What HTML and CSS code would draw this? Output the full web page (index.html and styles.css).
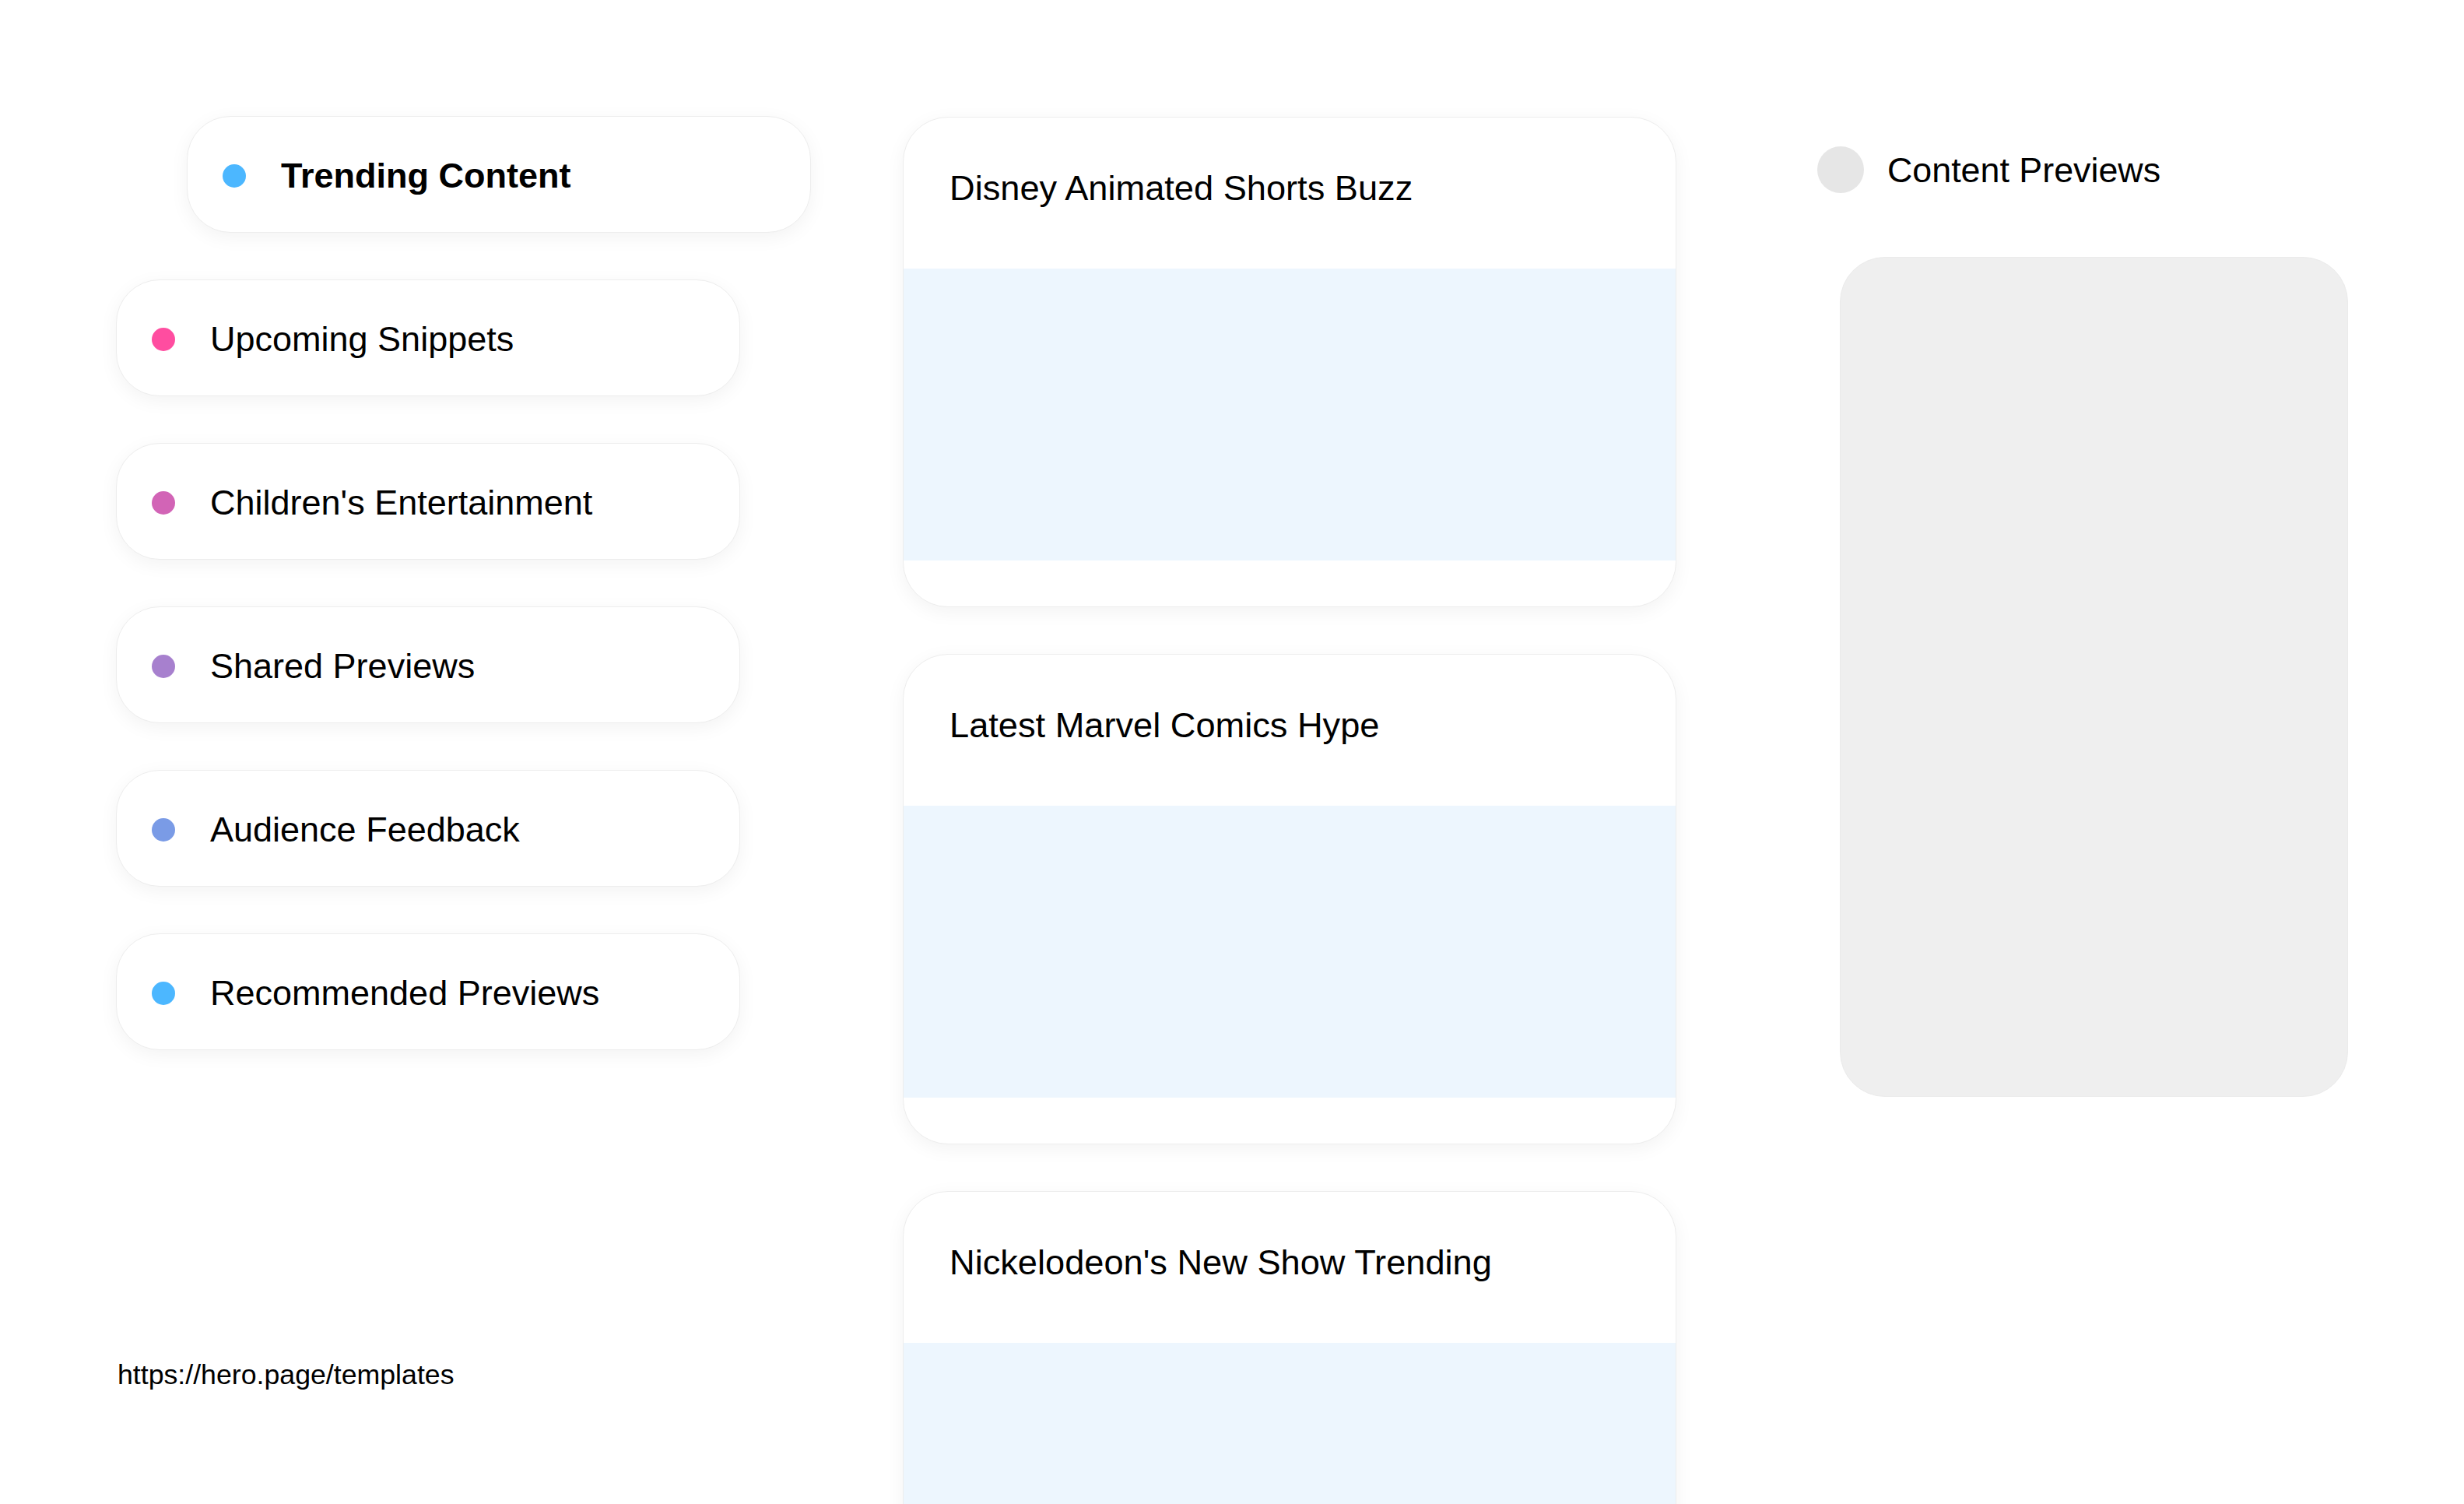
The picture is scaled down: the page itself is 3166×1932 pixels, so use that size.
FILE: index.html
```html
<!DOCTYPE html>
<html lang="en">
<head>
<meta charset="utf-8">
<title>Content Previews</title>
<link rel="stylesheet" href="styles.css">
</head>
<body>
<div class="page">
  <aside class="left">
    <nav class="nav">
      <div class="pill active"><span class="dot dot-blue"></span><span class="pill-label">Trending Content</span></div>
      <div class="pill"><span class="dot dot-pink"></span><span class="pill-label">Upcoming Snippets</span></div>
      <div class="pill"><span class="dot dot-magenta"></span><span class="pill-label">Children's Entertainment</span></div>
      <div class="pill"><span class="dot dot-purple"></span><span class="pill-label">Shared Previews</span></div>
      <div class="pill"><span class="dot dot-indigo"></span><span class="pill-label">Audience Feedback</span></div>
      <div class="pill"><span class="dot dot-blue"></span><span class="pill-label">Recommended Previews</span></div>
    </nav>
    <div class="footer-link">https://hero.page/templates</div>
  </aside>

  <main class="feed">
    <article class="card">
      <div class="card-head"><h3 class="card-title">Disney Animated Shorts Buzz</h3></div>
      <div class="card-media"></div>
      <div class="card-foot"></div>
    </article>
    <article class="card">
      <div class="card-head"><h3 class="card-title">Latest Marvel Comics Hype</h3></div>
      <div class="card-media"></div>
      <div class="card-foot"></div>
    </article>
    <article class="card">
      <div class="card-head"><h3 class="card-title">Nickelodeon's New Show Trending</h3></div>
      <div class="card-media"></div>
      <div class="card-foot"></div>
    </article>
  </main>

  <section class="preview">
    <div class="preview-head"><span class="preview-dot"></span><span class="preview-title">Content Previews</span></div>
    <div class="preview-panel"></div>
  </section>
</div>
</body>
</html>
```

FILE: styles.css
```css
html, body {
  margin: 0;
  padding: 0;
  background: #ffffff;
}

body {
  font-family: "Liberation Sans", Arial, sans-serif;
  color: #000000;
}

.page {
  display: flex;
  align-items: flex-start;
  padding: 149px 0 0 149px;
}

/* Left navigation */
.left {
  width: 810px;
  flex-shrink: 0;
  display: flex;
  flex-direction: column;
}

.nav {
  display: flex;
  flex-direction: column;
  gap: 60px;
}

.pill {
  box-sizing: border-box;
  width: 802px;
  height: 150px;
  display: flex;
  align-items: center;
  gap: 45px;
  padding: 4px 0 0 45px;
  background: #ffffff;
  border: 1px solid #ededed;
  border-radius: 56px;
  box-shadow: 0 6px 24px rgba(0, 0, 0, 0.05);
  font-size: 45px;
}

.pill.active {
  margin-left: 91px;
  font-weight: 700;
}

.dot {
  width: 30px;
  height: 30px;
  border-radius: 50%;
  flex-shrink: 0;
}

.dot-blue { background: #4cb7ff; }
.dot-pink { background: #ff4da0; }
.dot-magenta { background: #d264b6; }
.dot-purple { background: #a780ce; }
.dot-indigo { background: #7a9be6; }

.footer-link {
  margin-top: 397px;
  padding-left: 2px;
  font-size: 35.7px;
  color: #000000;
}

/* Middle feed */
.feed {
  width: 994px;
  flex-shrink: 0;
  margin-left: 201px;
  margin-top: 1px;
  display: flex;
  flex-direction: column;
  gap: 60px;
}

.card {
  box-sizing: border-box;
  height: 630px;
  display: flex;
  flex-direction: column;
  background: #ffffff;
  border: 1px solid #ededed;
  border-radius: 58px;
  overflow: hidden;
  box-shadow: 0 6px 24px rgba(0, 0, 0, 0.05);
  flex-shrink: 0;
}

.card-head {
  box-sizing: border-box;
  height: 194px;
  padding: 65px 60px 0 59px;
  flex-shrink: 0;
}

.card-title {
  margin: 0;
  font-size: 45.2px;
  font-weight: 400;
}

.card-media {
  height: 375px;
  background: #edf6fe;
  flex-shrink: 0;
}

.card-foot {
  flex: 1;
}

/* Right preview column */
.preview {
  width: 715px;
  flex-shrink: 0;
  margin-left: 181px;
  display: flex;
  flex-direction: column;
}

.preview-head {
  margin-top: 39px;
  height: 60px;
  display: flex;
  align-items: center;
  gap: 30px;
}

.preview-dot {
  width: 60px;
  height: 60px;
  border-radius: 50%;
  background: #e6e6e6;
  flex-shrink: 0;
}

.preview-title {
  font-size: 44.8px;
}

.preview-panel {
  box-sizing: border-box;
  width: 653px;
  height: 1079px;
  margin: 82px 0 0 29px;
  background: #efefef;
  border: 1px solid #ebebeb;
  border-radius: 58px;
}
```
